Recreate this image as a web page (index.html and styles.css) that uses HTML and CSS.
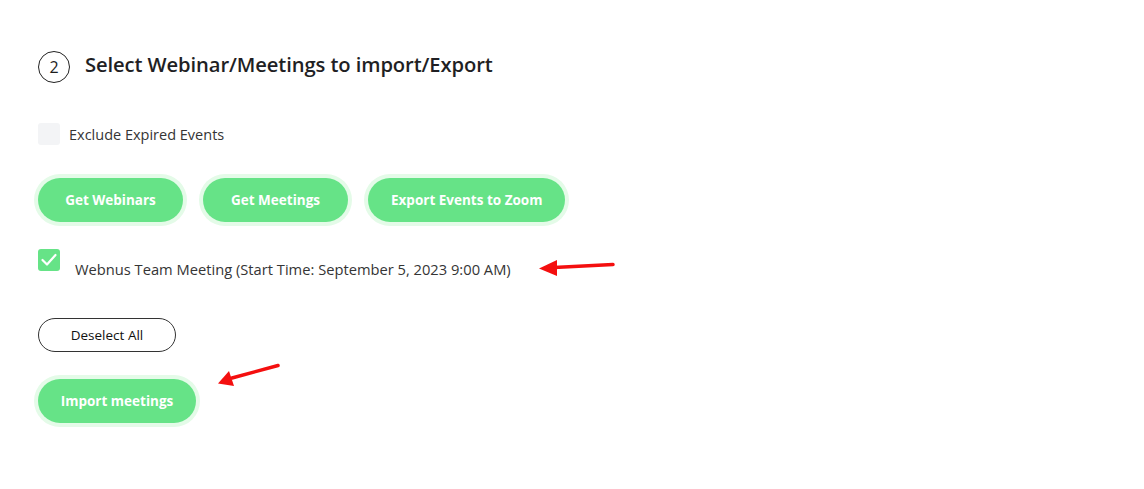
FILE: index.html
```html
<!DOCTYPE html>
<html>
<head>
<meta charset="utf-8">
<link rel="stylesheet" href="styles.css">
</head>
<body>
<div class="page">
  <div class="step-head">
    <span class="step-num">2</span>
    <h2 class="step-title">Select Webinar/Meetings to import/Export</h2>
  </div>

  <label class="check-row">
    <span class="box"></span>
    <span class="check-label">Exclude Expired Events</span>
  </label>

  <div class="btn-row">
    <button class="btn-green btn-w1">Get Webinars</button>
    <button class="btn-green btn-w1">Get Meetings</button>
    <button class="btn-green">Export Events to Zoom</button>
  </div>

  <label class="item-row">
    <span class="box box-checked">
      <svg width="22" height="22" viewBox="0 0 22 22"><path d="M4.5 11 L9 15.5 L17.5 6" fill="none" stroke="#fff" stroke-width="2.2" stroke-linecap="round" stroke-linejoin="round"/></svg>
    </span>
    <span class="item-label">Webnus Team Meeting (Start Time: September 5, 2023 9:00 AM)</span>
  </label>

  <button class="btn-outline">Deselect All</button>

  <div class="import-row">
    <button class="btn-green btn-import">Import meetings</button>
  </div>

  <svg class="arrow arrow-1" width="1144" height="489" viewBox="0 0 1144 489">
    <line x1="613" y1="264.5" x2="554" y2="267.5" stroke="#f40f0f" stroke-width="3.5" stroke-linecap="round"/>
    <polygon points="539,268.5 557,260 557,276" fill="#f40f0f"/>
    <line x1="278" y1="365.5" x2="232" y2="378" stroke="#f40f0f" stroke-width="3.5" stroke-linecap="round"/>
    <polygon points="218,383.5 229,371 234,386" fill="#f40f0f"/>
  </svg>
</div>
</body>
</html>
```

FILE: styles.css
```css
html, body {
  margin: 0;
  padding: 0;
  background: #ffffff;
}
.page {
  position: relative;
  width: 1144px;
  height: 489px;
  box-sizing: border-box;
  padding: 51px 0 0 38px;
  font-family: "Open Sans", "Noto Sans", sans-serif;
  color: #2e2e2e;
}
.step-head {
  display: flex;
  align-items: center;
  gap: 15px;
  height: 32px;
}
.step-num {
  width: 32px;
  height: 32px;
  box-sizing: border-box;
  border: 1px solid #222;
  border-radius: 50%;
  display: flex;
  align-items: center;
  justify-content: center;
  font-size: 16px;
  color: #1d1d1d;
}
.step-title {
  margin: 0 0 6px 0;
  font-size: 20.2px;
  font-weight: 600;
  color: #1f1f24;
  letter-spacing: -0.1px;
}
.check-row {
  margin-top: 40px;
  display: flex;
  align-items: center;
  gap: 9px;
  height: 22px;
}
.box {
  width: 22px;
  height: 22px;
  border-radius: 3px;
  background: #f3f4f6;
  flex: none;
  display: block;
}
.box svg { display: block; }
.box-checked {
  background: #66e387;
}
.check-label {
  font-size: 14.5px;
  color: #353535;
}
.btn-row {
  margin-top: 33px;
  display: flex;
  gap: 20px;
}
.btn-green {
  height: 44px;
  margin: 0;
  border: 0;
  border-radius: 22px;
  background: #66e387;
  box-shadow: 0 0 0 4px #e4fbe8;
  color: #ffffff;
  font-family: "Open Sans", "Noto Sans", sans-serif;
  font-weight: 700;
  font-size: 13.5px;
  padding: 0 23px;
  cursor: pointer;
}
.btn-w1 {
  width: 145px;
  padding: 0;
}
.item-row {
  margin-top: 27px;
  display: flex;
  align-items: flex-start;
  gap: 15px;
}
.item-label {
  margin-top: 10px;
  line-height: 20px;
  font-size: 14.7px;
  color: #353535;
}
.btn-outline {
  display: block;
  margin-top: 39px;
  width: 138px;
  height: 34px;
  border: 1px solid #333;
  border-radius: 17px;
  background: #fff;
  font-family: "Open Sans", "Noto Sans", sans-serif;
  font-size: 13.5px;
  color: #111;
  padding: 0;
}
.import-row {
  margin-top: 27px;
  display: flex;
}
.btn-import {
  width: 158px;
  padding: 0;
}
.arrow {
  position: absolute;
  left: 0;
  top: 0;
  pointer-events: none;
}
```
